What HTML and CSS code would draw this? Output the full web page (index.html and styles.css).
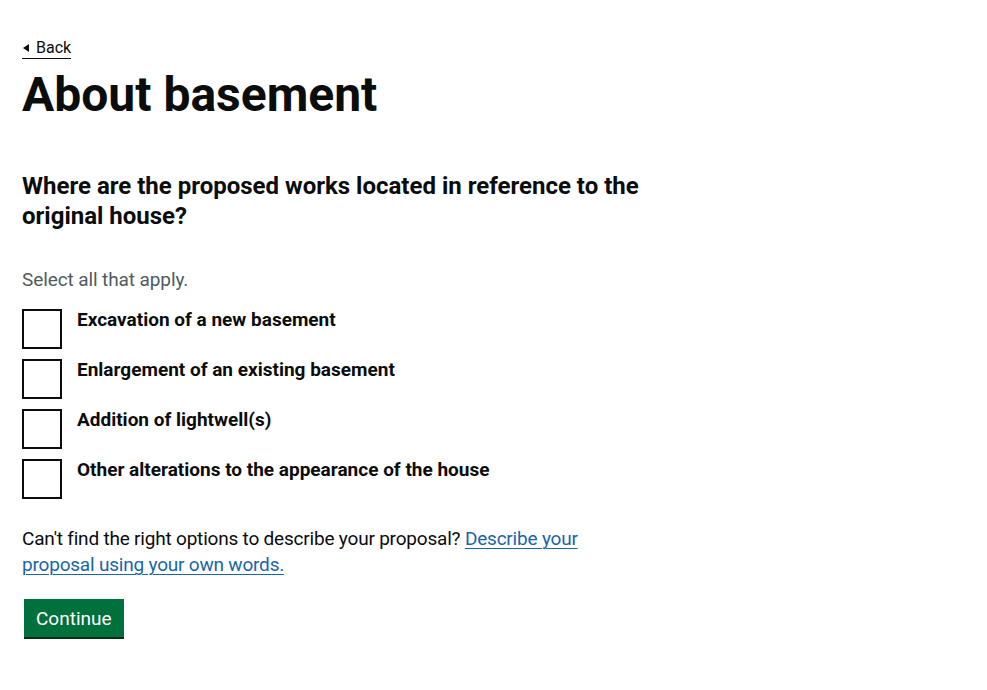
FILE: index.html
```html
<!DOCTYPE html>
<html lang="en">
<head>
<meta charset="utf-8">
<title>About basement</title>
<link rel="stylesheet" href="styles.css">
</head>
<body>
<div class="page">
  <a href="#" class="back-link">Back</a>
  <main class="main">
    <h1 class="heading-xl">About basement</h1>
    <form class="form">
      <fieldset class="fieldset">
        <legend class="legend">Where are the proposed works located in reference to the original house?</legend>
        <div class="hint">Select all that apply.</div>
        <div class="checkboxes">
          <label class="checkbox"><input type="checkbox" class="checkbox-input"><span class="checkbox-box"></span><span class="checkbox-label">Excavation of a new basement</span></label>
          <label class="checkbox"><input type="checkbox" class="checkbox-input"><span class="checkbox-box"></span><span class="checkbox-label">Enlargement of an existing basement</span></label>
          <label class="checkbox"><input type="checkbox" class="checkbox-input"><span class="checkbox-box"></span><span class="checkbox-label">Addition of lightwell(s)</span></label>
          <label class="checkbox"><input type="checkbox" class="checkbox-input"><span class="checkbox-box"></span><span class="checkbox-label">Other alterations to the appearance of the house</span></label>
        </div>
      </fieldset>
      <p class="body">Can't find the right options to describe your proposal? <a href="#" class="link">Describe your proposal using your own words.</a></p>
      <button type="button" class="button">Continue</button>
    </form>
  </main>
</div>
</body>
</html>
```
FILE: styles.css
```css
* { box-sizing: border-box; }
html, body { margin: 0; padding: 0; background: #ffffff; }
body {
  font-family: Roboto, "Liberation Sans", Arial, sans-serif;
  color: #0b0c0c;
  -webkit-font-smoothing: antialiased;
}
.page {
  padding: 38px 22px 40px;
}
.back-link {
  display: inline-block;
  position: relative;
  padding-left: 14px;
  font-size: 16px;
  line-height: 20px;
  color: #0b0c0c;
  text-decoration: none;
  border-bottom: 1px solid #0b0c0c;
}
.back-link::before {
  content: "";
  position: absolute;
  left: 1px;
  top: 6px;
  width: 0;
  height: 0;
  border-style: solid;
  border-width: 4px 6px 4px 0;
  border-color: transparent #0b0c0c transparent transparent;
}
.main {
  max-width: 630px;
  padding-top: 11px;
}
.heading-xl {
  margin: 0 0 51px;
  font-size: 48px;
  line-height: 50px;
  font-weight: 700;
}
.form { margin: 0; }
.fieldset {
  margin: 0;
  padding: 0;
  border: 0;
  min-width: 0;
}
.legend {
  padding: 0;
  margin: 0;
  font-size: 24px;
  line-height: 30px;
  font-weight: 700;
}
.hint {
  margin-top: 36px;
  margin-bottom: 17px;
  font-size: 19px;
  line-height: 25px;
  color: #505a5f;
  letter-spacing: -0.1px;
}
.checkboxes {
  display: flex;
  flex-direction: column;
  gap: 10px;
}
.checkbox {
  display: flex;
  align-items: flex-start;
  gap: 15px;
  cursor: pointer;
}
.checkbox-input {
  position: absolute;
  opacity: 0;
  width: 0;
  height: 0;
  margin: 0;
}
.checkbox-box {
  flex: none;
  width: 40px;
  height: 40px;
  border: 2px solid #0b0c0c;
  background: #ffffff;
}
.checkbox-label {
  font-size: 19px;
  line-height: 21px;
  font-weight: 700;
}
.body {
  margin: 27px 0 0;
  font-size: 19px;
  line-height: 26px;
  letter-spacing: -0.2px;
}
.link {
  color: #1a65a8;
  text-decoration: underline;
  text-decoration-thickness: 1px;
  text-underline-offset: 3px;
}
.button {
  display: inline-block;
  margin: 21px 0 0 2px;
  padding: 8px 12px 7px;
  border: 0;
  background: #00703c;
  color: #ffffff;
  font-family: Roboto, "Liberation Sans", Arial, sans-serif;
  font-size: 19px;
  line-height: 23px;
  box-shadow: 0 2px 0 #002d18;
  cursor: pointer;
}
```
